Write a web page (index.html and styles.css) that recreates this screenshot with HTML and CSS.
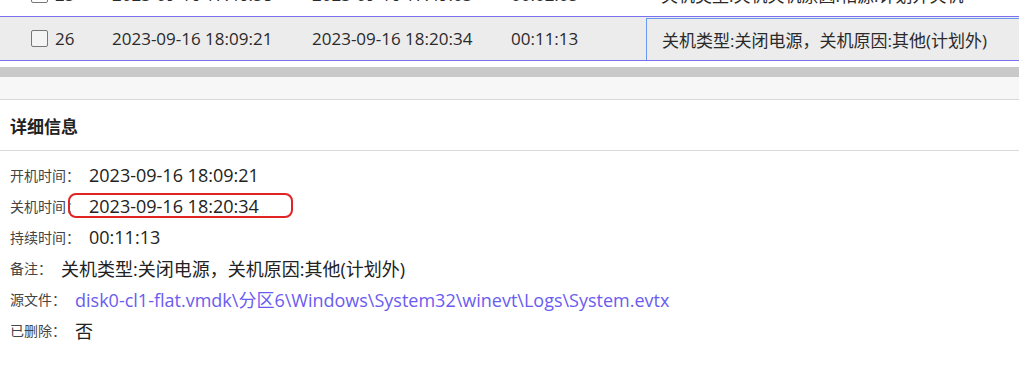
FILE: index.html
```html
<!DOCTYPE html>
<html>
<head>
    <meta charset="UTF-8">
    <title>开关机记录</title>
    <link rel="stylesheet" href="styles.css">
</head>
<body>

<div class="grid">
    <div class="row row-prev">
        <div class="cell c-id"><span class="check"></span>25</div>
        <div class="cell c-time">2023-09-16 17:46:58</div>
        <div class="cell c-time">2023-09-16 17:49:03</div>
        <div class="cell c-dur">00:02:05</div>
        <div class="cell c-note">关机类型:关机关机原因:相源:计划外关机</div>
    </div>
    <div class="row row-sel">
        <div class="cell c-id"><span class="check"></span>26</div>
        <div class="cell c-time">2023-09-16 18:09:21</div>
        <div class="cell c-time">2023-09-16 18:20:34</div>
        <div class="cell c-dur">00:11:13</div>
        <div class="cell c-note focused">关机类型:关闭电源，关机原因:其他(计划外)</div>
    </div>
</div>

<div class="hscroll"></div>
<div class="footer-bar"></div>

<div class="detail">
    <h3 class="detail-title">详细信息</h3>
    <div class="fields">
        <div class="field"><span class="label">开机时间：</span><span class="value">2023-09-16 18:09:21</span></div>
        <div class="field">
            <span class="label">关机时间：</span><span class="value">2023-09-16 18:20:34</span>
            <span class="mark"></span>
        </div>
        <div class="field"><span class="label">持续时间：</span><span class="value">00:11:13</span></div>
        <div class="field"><span class="label">备注：</span><span class="value">关机类型:关闭电源，关机原因:其他(计划外)</span></div>
        <div class="field"><span class="label">源文件：</span><span class="value link">disk0-cl1-flat.vmdk\分区6\Windows\System32\winevt\Logs\System.evtx</span></div>
        <div class="field"><span class="label">已删除：</span><span class="value">否</span></div>
    </div>
</div>

</body>
</html>
```

FILE: styles.css
```css
body {
    margin: 0;
    font-family: "Open Sans", "Noto Sans CJK SC", sans-serif;
    color: #222;
    background: #fff;
    overflow: hidden;
}
.grid {
    margin-top: -27px;
}
.row {
    display: flex;
    height: 43px;
    border-bottom: 1px solid #7a70f0;
    font-size: 17px;
    color: #2a2a2a;
}
.row-sel {
    background: #ececec;
}
.cell {
    display: flex;
    align-items: center;
    white-space: nowrap;
    overflow: hidden;
    box-sizing: border-box;
}
.c-id {
    width: 100px;
    padding-left: 31px;
    gap: 7px;
}
.check {
    width: 15px;
    height: 15px;
    border: 1.5px solid #777;
    border-radius: 2px;
    background: #fff;
}
.row-sel .check {
    background: #f4f4f4;
}
.c-time {
    width: 200px;
    padding-left: 12px;
}
.c-time + .c-time {
    width: 199px;
}
.c-dur {
    width: 147px;
    padding-left: 12px;
}
.c-note {
    flex: 1;
    padding-left: 15px;
}
.focused {
    margin-top: 1px;
    border: 1px solid #6a98f0;
    border-right: none;
    border-bottom: none;
}
.hscroll {
    margin-top: 6px;
    height: 10px;
    background: #c9c9c9;
}
.footer-bar {
    height: 22px;
    background: #f7f7f7;
    border-bottom: 1px solid #d8d8d8;
}
.detail-title {
    margin: 0;
    padding: 0 10px;
    height: 50px;
    line-height: 54px;
    font-size: 17px;
    font-weight: bold;
    color: #222;
    border-bottom: 1px solid #d9d9d9;
}
.fields {
    padding: 8px 10px 0;
}
.field {
    position: relative;
    display: flex;
    align-items: center;
    height: 31px;
    gap: 9px;
}
.label {
    font-size: 14px;
    color: #444;
}
.value {
    font-size: 18px;
    color: #222;
}
.link {
    color: #6a5cf0;
}
.mark {
    position: absolute;
    left: 58px;
    top: 3px;
    width: 221px;
    height: 21px;
    border: 2px solid #e02424;
    border-radius: 8px;
}
```
